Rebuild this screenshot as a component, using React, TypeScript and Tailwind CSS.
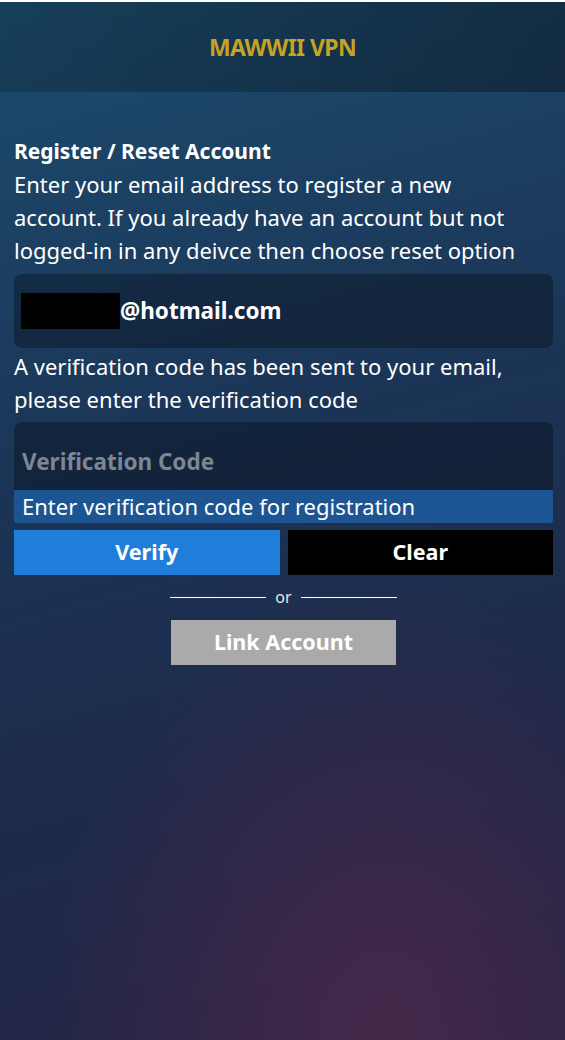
export default function App() {
  return (
    <div className="flex min-h-screen flex-col bg-[radial-gradient(ellipse_60%_45%_at_68%_100%,#45284a_0%,rgba(69,40,74,0)_100%),linear-gradient(165deg,#1b4d6e_0%,#1b3557_40%,#1e2a4a_70%,#262444_100%)] font-['Noto_Sans',sans-serif] text-white">
      <div className="h-[2px] bg-white" />

      <header className="flex h-[90px] items-center justify-center bg-[linear-gradient(90deg,rgba(0,0,0,0.18),rgba(0,0,0,0.34))]">
        <h1 className="text-[23px] font-bold tracking-tight text-[#c8a223]">
          MAWWII VPN
        </h1>
      </header>

      <main className="flex flex-col pl-[14px] pr-[12px] pt-[43px]">
        <h2 className="text-[21px] font-bold leading-[33px]">
          Register / Reset Account
        </h2>
        <p className="text-[22px] leading-[33px]">
          Enter your email address to register a new
          <br />
          account. If you already have an account but not
          <br />
          logged-in in any deivce then choose reset option
        </p>

        <div className="mt-[7px] flex h-[74px] items-center rounded-lg bg-black/30 px-[7px]">
          <span className="h-[36px] w-[99px] bg-black" />
          <span className="text-[22.5px] font-bold">@hotmail.com</span>
        </div>

        <p className="mt-[2px] text-[22px] leading-[33px]">
          A verification code has been sent to your email,
          <br />
          please enter the verification code
        </p>

        <div className="mt-[6px] flex flex-col">
          <div className="flex h-[68px] items-end rounded-t-lg bg-black/30 px-[8px] pb-[12px]">
            <span className="text-[22.5px] font-bold leading-[33px] text-[#7d8792]">
              Verification Code
            </span>
          </div>
          <div className="flex h-[33px] items-center rounded-b-[3px] bg-[#1c5591] px-[8px] text-[22px]">
            Enter verification code for registration
          </div>
        </div>

        <div className="mt-[7px] flex gap-[8px]">
          <button
            type="button"
            className="flex h-[45px] flex-1 items-center justify-center bg-[#1f7ed9] text-[21.5px] font-bold"
          >
            Verify
          </button>
          <button
            type="button"
            className="flex h-[45px] flex-1 items-center justify-center bg-black text-[21.5px] font-bold"
          >
            Clear
          </button>
        </div>

        <div className="mt-[12px] flex items-center justify-center gap-[9px]">
          <span className="h-px w-[96px] bg-white" />
          <span className="text-[16px] leading-[20px] text-[#e4e6ea]">or</span>
          <span className="h-px w-[96px] bg-white" />
        </div>

        <div className="mt-[13px] flex justify-center">
          <button
            type="button"
            className="flex h-[45px] w-[225px] items-center justify-center bg-[#aaaaaa] text-[21.5px] font-bold"
          >
            Link Account
          </button>
        </div>
      </main>
    </div>
  );
}
